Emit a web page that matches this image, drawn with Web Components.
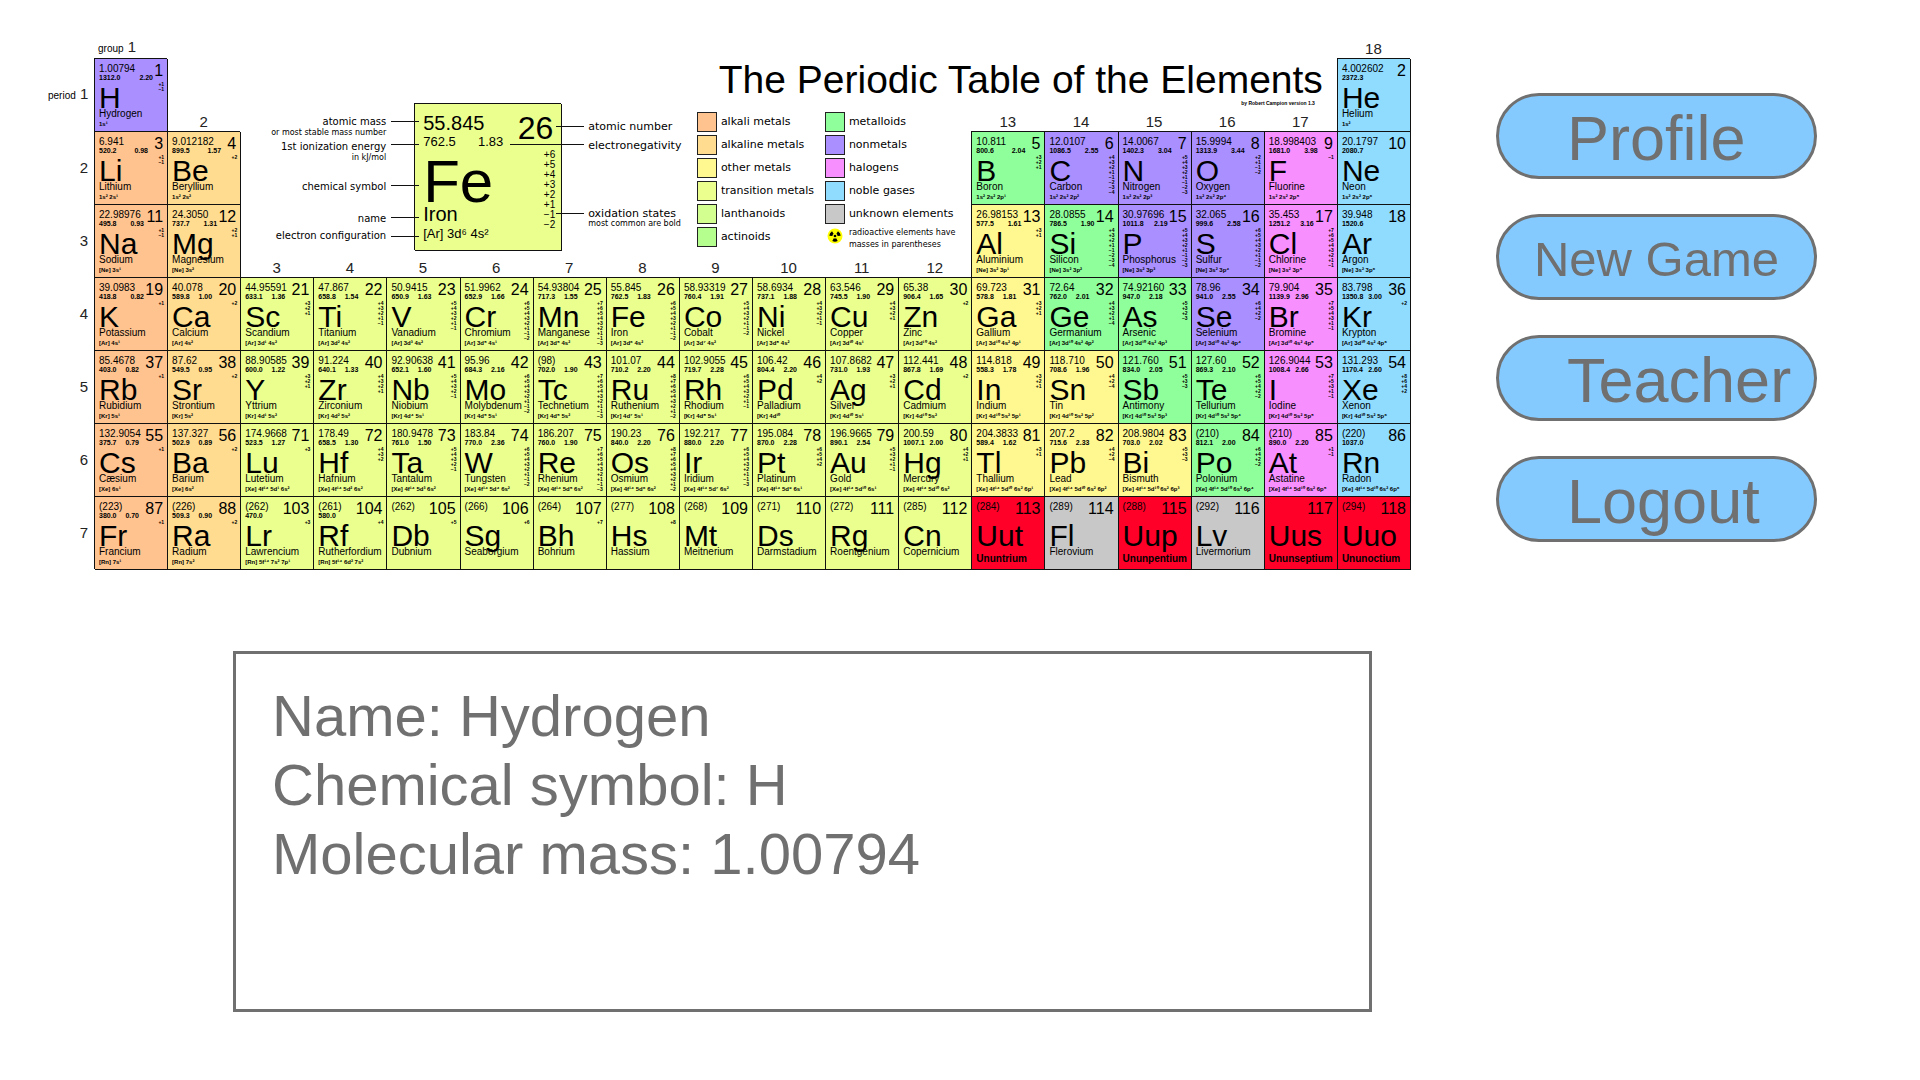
<!DOCTYPE html>
<html lang="en">
<head>
<meta charset="utf-8">
<title>The Periodic Table of the Elements</title>
<style>
  body { margin: 0; background: #fff; color: #000; font-family: "Liberation Sans", Arial, sans-serif; }
</style>
</head>
<body>
<game-page>
  <periodic-table></periodic-table>
  <side-menu slot="menu">
    <pill-button>Profile</pill-button>
    <pill-button compact>New Game</pill-button>
    <pill-button>Teacher</pill-button>
    <pill-button>Logout</pill-button>
  </side-menu>
  <element-info slot="info">
    <info-line label="Name:">Hydrogen</info-line>
    <info-line label="Chemical symbol:">H</info-line>
    <info-line label="Molecular mass:">1.00794</info-line>
  </element-info>
</game-page>

<script>
const COLORS = {
  ak: '#ffc38f', ae: '#ffdc8f', om: '#fff78f', tm: '#ebff8f', la: '#d2ff8f', ac: '#b5ff8f',
  me: '#8fff9c', nm: '#a98fff', ha: '#f88fff', ng: '#8fdcff', un: '#c8c8c8', rd: '#ff0029'
};

// number|symbol|name|mass|ionization|electronegativity|configuration|oxidation states|category|period|group
const ELEMENTS = `
1|H|Hydrogen|1.00794|1312.0|2.20|1s1|+1 −1|nm|1|1
2|He|Helium|4.002602|2372.3||1s2||ng|1|18
3|Li|Lithium|6.941|520.2|0.98|1s2 2s1|+1 −1|ak|2|1
4|Be|Beryllium|9.012182|899.5|1.57|1s2 2s2|+2|ae|2|2
5|B|Boron|10.811|800.6|2.04|1s2 2s2 2p1|+3 +2 +1|me|2|13
6|C|Carbon|12.0107|1086.5|2.55|1s2 2s2 2p2|+4 +3 +2 +1 −1 −2 −3 −4|nm|2|14
7|N|Nitrogen|14.0067|1402.3|3.04|1s2 2s2 2p3|+5 +4 +3 +2 +1 −1 −2 −3|nm|2|15
8|O|Oxygen|15.9994|1313.9|3.44|1s2 2s2 2p4|+2 +1 −1 −2|nm|2|16
9|F|Fluorine|18.998403|1681.0|3.98|1s2 2s2 2p5|−1|ha|2|17
10|Ne|Neon|20.1797|2080.7||1s2 2s2 2p6||ng|2|18
11|Na|Sodium|22.98976|495.8|0.93|[Ne] 3s1|+1 −1|ak|3|1
12|Mg|Magnesium|24.3050|737.7|1.31|[Ne] 3s2|+2 +1|ae|3|2
13|Al|Aluminium|26.98153|577.5|1.61|[Ne] 3s2 3p1|+3 +1|om|3|13
14|Si|Silicon|28.0855|786.5|1.90|[Ne] 3s2 3p2|+4 +3 +2 +1 −1 −2 −3 −4|me|3|14
15|P|Phosphorus|30.97696|1011.8|2.19|[Ne] 3s2 3p3|+5 +4 +3 +2 +1 −1 −2 −3|nm|3|15
16|S|Sulfur|32.065|999.6|2.58|[Ne] 3s2 3p4|+6 +5 +4 +3 +2 +1 −1 −2|nm|3|16
17|Cl|Chlorine|35.453|1251.2|3.16|[Ne] 3s2 3p5|+7 +6 +5 +4 +3 +2 +1 −1|ha|3|17
18|Ar|Argon|39.948|1520.6||[Ne] 3s2 3p6||ng|3|18
19|K|Potassium|39.0983|418.8|0.82|[Ar] 4s1|+1|ak|4|1
20|Ca|Calcium|40.078|589.8|1.00|[Ar] 4s2|+2|ae|4|2
21|Sc|Scandium|44.95591|633.1|1.36|[Ar] 3d1 4s2|+3 +2 +1|tm|4|3
22|Ti|Titanium|47.867|658.8|1.54|[Ar] 3d2 4s2|+4 +3 +2 +1 −1|tm|4|4
23|V|Vanadium|50.9415|650.9|1.63|[Ar] 3d3 4s2|+5 +4 +3 +2 +1 −1|tm|4|5
24|Cr|Chromium|51.9962|652.9|1.66|[Ar] 3d5 4s1|+6 +5 +4 +3 +2 +1 −1 −2|tm|4|6
25|Mn|Manganese|54.93804|717.3|1.55|[Ar] 3d5 4s2|+7 +6 +5 +4 +3 +2 +1 −1 −3|tm|4|7
26|Fe|Iron|55.845|762.5|1.83|[Ar] 3d6 4s2|+6 +5 +4 +3 +2 +1 −1 −2|tm|4|8
27|Co|Cobalt|58.93319|760.4|1.91|[Ar] 3d7 4s2|+5 +4 +3 +2 +1 −1 −2|tm|4|9
28|Ni|Nickel|58.6934|737.1|1.88|[Ar] 3d8 4s2|+4 +3 +2 +1 −1|tm|4|10
29|Cu|Copper|63.546|745.5|1.90|[Ar] 3d10 4s1|+4 +3 +2 +1|tm|4|11
30|Zn|Zinc|65.38|906.4|1.65|[Ar] 3d10 4s2|+2|tm|4|12
31|Ga|Gallium|69.723|578.8|1.81|[Ar] 3d10 4s2 4p1|+3 +2 +1|om|4|13
32|Ge|Germanium|72.64|762.0|2.01|[Ar] 3d10 4s2 4p2|+4 +3 +2 +1 −4|me|4|14
33|As|Arsenic|74.92160|947.0|2.18|[Ar] 3d10 4s2 4p3|+5 +3 +2 −3|me|4|15
34|Se|Selenium|78.96|941.0|2.55|[Ar] 3d10 4s2 4p4|+6 +4 +2 −2|nm|4|16
35|Br|Bromine|79.904|1139.9|2.96|[Ar] 3d10 4s2 4p5|+7 +5 +4 +3 +1 −1|ha|4|17
36|Kr|Krypton|83.798|1350.8|3.00|[Ar] 3d10 4s2 4p6|+2|ng|4|18
37|Rb|Rubidium|85.4678|403.0|0.82|[Kr] 5s1|+1|ak|5|1
38|Sr|Strontium|87.62|549.5|0.95|[Kr] 5s2|+2|ae|5|2
39|Y|Yttrium|88.90585|600.0|1.22|[Kr] 4d1 5s2|+3 +2 +1|tm|5|3
40|Zr|Zirconium|91.224|640.1|1.33|[Kr] 4d2 5s2|+4 +3 +2 +1|tm|5|4
41|Nb|Niobium|92.90638|652.1|1.60|[Kr] 4d4 5s1|+5 +4 +3 +2 −1|tm|5|5
42|Mo|Molybdenum|95.96|684.3|2.16|[Kr] 4d5 5s1|+6 +5 +4 +3 +2 +1 −1 −2|tm|5|6
43|Tc|Technetium|(98)|702.0|1.90|[Kr] 4d5 5s2|+7 +6 +5 +4 +3 +2 +1 −1 −3|tm|5|7
44|Ru|Ruthenium|101.07|710.2|2.20|[Kr] 4d7 5s1|+8 +7 +6 +5 +4 +3 +2 +1 −2|tm|5|8
45|Rh|Rhodium|102.9055|719.7|2.28|[Kr] 4d8 5s1|+6 +5 +4 +3 +2 +1 −1|tm|5|9
46|Pd|Palladium|106.42|804.4|2.20|[Kr] 4d10|+4 +2|tm|5|10
47|Ag|Silver|107.8682|731.0|1.93|[Kr] 4d10 5s1|+3 +2 +1|tm|5|11
48|Cd|Cadmium|112.441|867.8|1.69|[Kr] 4d10 5s2|+2|tm|5|12
49|In|Indium|114.818|558.3|1.78|[Kr] 4d10 5s2 5p1|+3 +2 +1|om|5|13
50|Sn|Tin|118.710|708.6|1.96|[Kr] 4d10 5s2 5p2|+4 +2 −4|om|5|14
51|Sb|Antimony|121.760|834.0|2.05|[Kr] 4d10 5s2 5p3|+5 +3 −3|me|5|15
52|Te|Tellurium|127.60|869.3|2.10|[Kr] 4d10 5s2 5p4|+6 +5 +4 +2 −2|me|5|16
53|I|Iodine|126.9044|1008.4|2.66|[Kr] 4d10 5s2 5p5|+7 +5 +3 +1 −1|ha|5|17
54|Xe|Xenon|131.293|1170.4|2.60|[Kr] 4d10 5s2 5p6|+8 +6 +4 +2|ng|5|18
55|Cs|Cæsium|132.9054|375.7|0.79|[Xe] 6s1|+1|ak|6|1
56|Ba|Barium|137.327|502.9|0.89|[Xe] 6s2|+2|ae|6|2
71|Lu|Lutetium|174.9668|523.5|1.27|[Xe] 4f14 5d1 6s2|+3|tm|6|3
72|Hf|Hafnium|178.49|658.5|1.30|[Xe] 4f14 5d2 6s2|+4 +3 +2|tm|6|4
73|Ta|Tantalum|180.9478|761.0|1.50|[Xe] 4f14 5d3 6s2|+5 +4 +3 +2 −1|tm|6|5
74|W|Tungsten|183.84|770.0|2.36|[Xe] 4f14 5d4 6s2|+6 +5 +4 +3 +2 +1 −1 −2|tm|6|6
75|Re|Rhenium|186.207|760.0|1.90|[Xe] 4f14 5d5 6s2|+7 +6 +5 +4 +3 +2 +1 −1 −3|tm|6|7
76|Os|Osmium|190.23|840.0|2.20|[Xe] 4f14 5d6 6s2|+8 +7 +6 +5 +4 +3 +2 +1 −2|tm|6|8
77|Ir|Iridium|192.217|880.0|2.20|[Xe] 4f14 5d7 6s2|+6 +5 +4 +3 +2 +1 −1 −3|tm|6|9
78|Pt|Platinum|195.084|870.0|2.28|[Xe] 4f14 5d9 6s1|+6 +5 +4 +2|tm|6|10
79|Au|Gold|196.9665|890.1|2.54|[Xe] 4f14 5d10 6s1|+5 +3 +2 +1 −1|tm|6|11
80|Hg|Mercury|200.59|1007.1|2.00|[Xe] 4f14 5d10 6s2|+4 +2 +1|tm|6|12
81|Tl|Thallium|204.3833|589.4|1.62|[Xe] 4f14 5d10 6s2 6p1|+3 +1|om|6|13
82|Pb|Lead|207.2|715.6|2.33|[Xe] 4f14 5d10 6s2 6p2|+4 +2 −4|om|6|14
83|Bi|Bismuth|208.9804|703.0|2.02|[Xe] 4f14 5d10 6s2 6p3|+5 +3 −3|om|6|15
84|Po|Polonium|(210)|812.1|2.00|[Xe] 4f14 5d10 6s2 6p4|+6 +4 +2 −2|me|6|16
85|At|Astatine|(210)|890.0|2.20|[Xe] 4f14 5d10 6s2 6p5|+1 −1|ha|6|17
86|Rn|Radon|(220)|1037.0||[Xe] 4f14 5d10 6s2 6p6||ng|6|18
87|Fr|Francium|(223)|380.0|0.70|[Rn] 7s1|+1|ak|7|1
88|Ra|Radium|(226)|509.3|0.90|[Rn] 7s2|+2|ae|7|2
103|Lr|Lawrencium|(262)|470.0||[Rn] 5f14 7s2 7p1|+3|tm|7|3
104|Rf|Rutherfordium|(261)|580.0||[Rn] 5f14 6d2 7s2|+4|tm|7|4
105|Db|Dubnium|(262)||||+5|tm|7|5
106|Sg|Seaborgium|(266)||||+6|tm|7|6
107|Bh|Bohrium|(264)||||+7|tm|7|7
108|Hs|Hassium|(277)||||+8|tm|7|8
109|Mt|Meitnerium|(268)|||||tm|7|9
110|Ds|Darmstadium|(271)|||||tm|7|10
111|Rg|Roentgenium|(272)|||||tm|7|11
112|Cn|Copernicium|(285)|||||tm|7|12
113|Uut|Ununtrium|(284)|||||rd|7|13
114|Fl|Flerovium|(289)|||||un|7|14
115|Uup|Ununpentium|(288)|||||rd|7|15
116|Lv|Livermorium|(292)|||||un|7|16
117|Uus|Ununseptium||||||rd|7|17
118|Uuo|Ununoctium|(294)|||||rd|7|18
`.trim().split('\n').map(line => {
  const [n, symbol, name, mass, ion, en, config, ox, cat, period, group] = line.split('|');
  return { n: +n, symbol, name, mass, ion, en, config, ox, cat, period: +period, group: +group };
});

const superscript = s => s.replace(/([spdf])(\d+)/g,
  (m, orbital, digits) => orbital + [...digits].map(d => '⁰¹²³⁴⁵⁶⁷⁸⁹'[d]).join(''));

class GamePage extends HTMLElement {
  constructor() {
    super();
    this.attachShadow({ mode: 'open' }).innerHTML = `
      <style>
        :host { display: block; }
        main {
          display: grid;
          grid-template-columns: minmax(0, 1fr) 321px;
          column-gap: 86px;
          padding: 40px 103px 40px 48px;
        }
        ::slotted([slot="menu"]) { margin-top: 53px; }
        ::slotted([slot="info"]) { grid-column: 1; margin: 82px 38px 0 185px; }
      </style>
      <main><slot></slot><slot name="menu"></slot><slot name="info"></slot></main>`;
  }
}

class SideMenu extends HTMLElement {
  constructor() {
    super();
    this.attachShadow({ mode: 'open' }).innerHTML = `
      <style>
        :host { display: block; }
        nav { display: flex; flex-direction: column; gap: 35px; }
      </style>
      <nav aria-label="Game menu"><slot></slot></nav>`;
  }
}

class PillButton extends HTMLElement {
  constructor() {
    super();
    this.attachShadow({ mode: 'open' }).innerHTML = `
      <style>
        :host { display: block; }
        button {
          box-sizing: border-box; display: block; width: 100%; height: 86px;
          padding: 4px 0 0 68px; border: 3px solid #707070; border-radius: 43px;
          background: #84caff; color: #707070; text-align: left;
          font-family: inherit; font-size: 63px; line-height: 76px;
          white-space: nowrap; cursor: pointer;
        }
        button:hover { background: #9ad4ff; }
        :host([compact]) button { font-size: 49px; padding-left: 0; text-align: center; }
      </style>
      <button type="button"><slot></slot></button>`;
  }
}

class ElementInfo extends HTMLElement {
  constructor() {
    super();
    this.attachShadow({ mode: 'open' }).innerHTML = `
      <style>
        :host {
          box-sizing: border-box; display: block; min-height: 361px;
          border: 3px solid #707070; padding: 27px 36px; color: #707070;
        }
      </style>
      <slot></slot>`;
  }
}

class InfoLine extends HTMLElement {
  constructor() {
    super();
    this.attachShadow({ mode: 'open' }).innerHTML = `
      <style>
        :host { display: block; font-size: 58px; line-height: 69px; }
      </style>
      <span></span> <slot></slot>`;
  }
  connectedCallback() {
    this.shadowRoot.querySelector('span').textContent = this.getAttribute('label');
  }
}

class ElementTile extends HTMLElement {
  constructor() {
    super();
    this.attachShadow({ mode: 'open' });
  }
  set data(d) {
    const span = d.n === 1 ? 54 : d.n < 10 ? 49 : d.n < 20 ? 45 : 40;
    this.shadowRoot.innerHTML = `
      <style>
        :host { --u: 1px; --ion: 7px; --conf: 6px; --tiny: bold; --span: ${span}px; display: block; box-sizing: border-box; height: 100%;
          background: ${COLORS[d.cat]}; border: solid #111; border-width: 1px 0 0 1px; box-shadow: 1px 1px 0 #111; }
        :host([large]) { --u: 2px; --ion: 13px; --conf: 13px; --tiny: normal; --span: 80px; }
        .tile { display: grid; grid-template-columns: minmax(0, 1fr) auto;
          grid-template-rows: calc(19 * var(--u)) calc(28 * var(--u)) calc(8 * var(--u)) auto;
          padding: calc(4 * var(--u)) calc(4 * var(--u)) 0 calc(4 * var(--u)); white-space: nowrap; }
        .mass { display: block; font-size: calc(10 * var(--u)); line-height: calc(11 * var(--u)); height: calc(11 * var(--u)); }
        .ion { display: flex; justify-content: space-between; width: var(--span); font-size: var(--ion); line-height: calc(8 * var(--u)); }
        .ion, .conf, .ox { font-weight: var(--tiny); }
        .top { grid-area: 1 / 1; min-width: 0; }
        .number { grid-area: 1 / 2; font-size: calc(16 * var(--u)); line-height: calc(16 * var(--u)); }
        .symbol { grid-area: 2 / 1 / 3 / 3; padding-top: calc(4 * var(--u)); font-size: calc(30 * var(--u)); line-height: calc(24 * var(--u)); }
        .name { grid-area: 3 / 1 / 4 / 3; font-size: calc(10 * var(--u)); line-height: calc(8 * var(--u)); }
        .name.strong { font-weight: bold; padding-top: 7px; }
        .conf { grid-area: 4 / 1 / 5 / 3; padding: calc(2 * var(--u)) 0 0 0; font-size: var(--conf); line-height: calc(8 * var(--u)); }
        .ox { grid-area: 2 / 1 / 5 / 3; justify-self: end; list-style: none; margin: 0 calc(-1 * var(--u)) 0 0; padding: 0;
          font-size: calc(5 * var(--u)); line-height: calc(5 * var(--u)); height: 0; }
      </style>
      <div class="tile">
        <div class="top"><span class="mass">${d.mass}</span><div class="ion"><span>${d.ion}</span><span>${d.en}</span></div></div>
        <span class="number">${d.n}</span>
        <span class="symbol">${d.symbol}</span>
        <span class="name${d.cat === 'rd' ? ' strong' : ''}">${d.name}</span>
        ${d.config ? `<span class="conf">${superscript(d.config)}</span>` : ''}
        ${d.ox ? `<ul class="ox">${d.ox.split(' ').map(o => `<li>${o}</li>`).join('')}</ul>` : ''}
      </div>`;
  }
}

class TileKey extends HTMLElement {
  constructor() {
    super();
    this.attachShadow({ mode: 'open' }).innerHTML = `
      <style>
        :host { display: grid; position: relative; grid-template-columns: 146px 202px auto; grid-template-rows: 147px;
          justify-content: start; font-family: "DejaVu Sans", sans-serif; white-space: nowrap; }
        .left { text-align: right; font-size: 10px; line-height: 12px; padding-top: 13px; }
        .right { font-size: 11px; line-height: 12px; padding-top: 18px; }
        element-tile { margin: 0 27px 0 28px; font-family: "Liberation Sans", sans-serif; }
        p { margin: 0; }
        small { display: block; font-size: 8px; line-height: 10px; }
        .ion { margin-top: 3px; } .sym { margin-top: 18px; } .name { margin-top: 20px; } .conf { margin-top: 5px; }
        .en { margin-top: 7px; } .ox { margin-top: 56px; } .ox small { line-height: 8px; }
        svg { position: absolute; left: 146px; top: 0; }
      </style>
      <div class="left">
        <p>atomic mass<small>or most stable mass number</small></p>
        <p class="ion">1st ionization energy<small>in kJ/mol</small></p>
        <p class="sym">chemical symbol</p>
        <p class="name">name</p>
        <p class="conf">electron configuration</p>
      </div>
      <element-tile large></element-tile>
      <div class="right">
        <p>atomic number</p>
        <p class="en">electronegativity</p>
        <p class="ox">oxidation states<small>most common are bold</small></p>
      </div>
      <svg width="202" height="147" viewBox="0 0 202 147" fill="none" stroke="#111" aria-hidden="true">
        <path d="M5 18.500H33M5 41.500H33M5 82.500H33M5 114.500H33M5 133.500H33M170 23.500H198M124 41.500H198M170 110.500H198"/>
      </svg>`;
  }
  connectedCallback() {
    this.shadowRoot.querySelector('element-tile').data = ELEMENTS.find(e => e.n === 26);
  }
}

class TableLegend extends HTMLElement {
  constructor() {
    super();
    const items = [['ak', 'alkali metals'], ['ae', 'alkaline metals'], ['om', 'other metals'], ['tm', 'transition metals'],
      ['la', 'lanthanoids'], ['ac', 'actinoids'], ['me', 'metalloids'], ['nm', 'nonmetals'], ['ha', 'halogens'],
      ['ng', 'noble gases'], ['un', 'unknown elements']];
    this.attachShadow({ mode: 'open' }).innerHTML = `
      <style>
        :host { display: block; font: 11px/20px "DejaVu Sans", sans-serif; white-space: nowrap; }
        ul { display: grid; grid-auto-flow: column; grid-template-rows: repeat(6, 20px); grid-template-columns: 128px auto;
          justify-content: start; row-gap: 3px; margin: 0; padding: 0; list-style: none; }
        li { display: flex; gap: 4px; }
        i { box-sizing: border-box; width: 20px; height: 20px; border: 1px solid #222; }
        svg { width: 16px; height: 16px; margin: 1px 2px; }
        small { font-size: 8px; line-height: 12px; }
      </style>
      <ul>
        ${items.map(([c, t]) => `<li><i style="background:${COLORS[c]}"></i><span>${t}</span></li>`).join('')}
        <li>
          <svg viewBox="-8 -8 16 16" aria-hidden="true">
            <circle r="7.500" fill="#ffff00"/>
            <circle r="1.300"/>
            <path id="b" d="M-1.200 2.300L-2.700 5A5.700 5.700 0 0 0 2.700 5L1.200 2.300A2.600 2.600 0 0 1-1.200 2.300Z"/>
            <use href="#b" transform="rotate(120)"/><use href="#b" transform="rotate(240)"/>
          </svg>
          <small>radioactive elements have<br>masses in parentheses</small>
        </li>
      </ul>`;
  }
}

class PeriodicTable extends HTMLElement {
  constructor() {
    super();
    this.attachShadow({ mode: 'open' }).innerHTML = `
      <style>
        :host { display: grid; grid-template-columns: 46px repeat(18, minmax(0, 1fr)); grid-template-rows: 18px repeat(7, 73px);
          align-content: start; }
        table, tbody, tr { display: contents; }
        th, td { display: block; padding: 0; }
        th { font-size: 15px; line-height: 16px; font-weight: normal; color: #222; }
        th small { font-size: 10px; color: #000; }
        .group { align-self: end; text-align: center; padding-bottom: 1px; }
        .group.first { text-align: left; padding-left: 4px; }
        .period { align-self: center; text-align: right; padding-right: 6px; white-space: nowrap; }
        header { grid-area: 2 / 9 / 3 / 19; justify-self: end; text-align: right; padding-right: 14px; }
        h1 { margin: 2px 0 0; font-size: 39px; line-height: 39px; font-weight: normal; white-space: nowrap; }
        header p { margin: 0; padding-right: 8px; font-size: 5px; line-height: 8px; font-weight: bold; }
        tile-key { grid-area: 2 / 4 / 5 / 10; margin-top: 45px; align-self: start; }
        table-legend { grid-area: 2 / 10 / 5 / 14; margin: 54px 0 0 18px; align-self: start; }
      </style>
      <header>
        <h1>The Periodic Table of the Elements</h1>
        <p>by Robert Campion version 1.3</p>
      </header>
      <tile-key></tile-key>
      <table-legend></table-legend>
      <table><tbody></tbody></table>`;
  }
  connectedCallback() {
    const body = this.shadowRoot.querySelector('tbody');
    if (body.rows.length) return;
    const place = (row, tag, gridRow, gridColumn, className = '', html = '') => {
      const cell = document.createElement(tag);
      cell.style.gridArea = `${gridRow} / ${gridColumn}`;
      cell.className = className;
      cell.innerHTML = html;
      row.append(cell);
      return cell;
    };
    const labelRow = group => group === 1 || group === 18 ? 0 : group === 2 || group > 12 ? 1 : 3;
    for (let period = 0; period <= 7; period++) {
      const row = document.createElement('tr');
      body.append(row);
      if (period) place(row, 'th', period + 1, 1, 'period', period === 1 ? '<small>period</small> 1' : period);
      for (let group = 1; group <= 18; group++) {
        if (labelRow(group) === period) {
          place(row, 'th', period + 1, group + 1, group === 1 ? 'group first' : 'group', group === 1 ? '<small>group</small> 1' : group);
        }
        const data = ELEMENTS.find(e => e.period === period && e.group === group);
        if (data) {
          const tile = document.createElement('element-tile');
          place(row, 'td', period + 1, group + 1).append(tile);
          tile.data = data;
        }
      }
    }
  }
}

customElements.define('element-tile', ElementTile);
customElements.define('tile-key', TileKey);
customElements.define('table-legend', TableLegend);
customElements.define('periodic-table', PeriodicTable);
customElements.define('pill-button', PillButton);
customElements.define('side-menu', SideMenu);
customElements.define('info-line', InfoLine);
customElements.define('element-info', ElementInfo);
customElements.define('game-page', GamePage);
</script>
</body>
</html>
